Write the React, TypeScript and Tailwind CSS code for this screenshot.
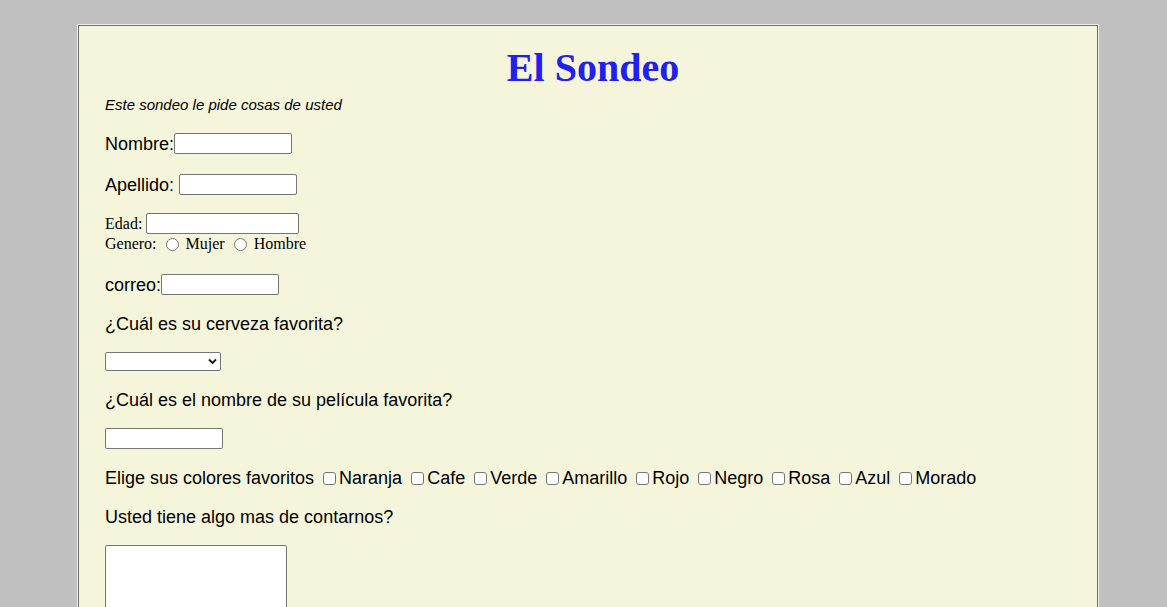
import React from "react";

const sans = { fontFamily: '"Liberation Sans", Arial, sans-serif' };
const serif = { fontFamily: '"Liberation Serif", "Times New Roman", serif' };

const inputCls =
  "h-[21px] self-start border border-[#767676] rounded-[2px] bg-white outline-none";

function Check() {
  return (
    <span className="inline-block w-[13px] h-[13px] shrink-0 border border-[#767676] rounded-[3px] bg-white ml-[9px] mr-[3px]" />
  );
}

function Radio() {
  return (
    <span className="inline-block w-[13px] h-[13px] shrink-0 rounded-full border border-[#767676] bg-white ml-[9px] mr-[7px]" />
  );
}

export default function App() {
  const colors = ["Naranja", "Cafe", "Verde", "Amarillo", "Rojo", "Negro", "Rosa", "Azul", "Morado"];
  return (
    <div className="min-h-screen bg-[#c0c0c0] pt-[24px] pl-[77px] text-black" style={sans}>
      <div className="w-[1022px] border border-[#ececec]">
        <div className="border border-[#6f6f6f] bg-[#f5f5dc] pl-[26px] pr-[16px] pt-[19px] pb-[60px]">
          <h1
            className="h-[46px] leading-[46px] text-center text-[40px] font-bold text-[#2020f0]"
            style={serif}
          >
            El Sondeo
          </h1>
          <div className="mt-[5px] h-[18px] leading-[18px] text-[15px] italic">
            Este sondeo le pide cosas de usted
          </div>

          <div className="mt-[19px] h-[22px] flex items-center text-[18px]">
            <span>Nombre:</span>
            <input className={`${inputCls} w-[118px]`} />
          </div>

          <div className="mt-[19px] h-[22px] flex items-center text-[18px]">
            <span>Apellido:</span>
            <input className={`${inputCls} w-[118px] ml-[5px]`} />
          </div>

          <div className="mt-[17px] h-[22px] flex items-center text-[16px]" style={serif}>
            <span>Edad:</span>
            <input className={`${inputCls} w-[153px] ml-[4px]`} />
          </div>
          <div className="h-[18px] flex items-center text-[16px]" style={serif}>
            <span>Genero:</span>
            <Radio />
            <span>Mujer</span>
            <Radio />
            <span>Hombre</span>
          </div>

          <div className="mt-[21px] h-[22px] flex items-center text-[18px]">
            <span>correo:</span>
            <input className={`${inputCls} w-[118px]`} />
          </div>

          <div className="mt-[17px] h-[22px] flex items-center text-[18px]">
            ¿Cuál es su cerveza favorita?
          </div>

          <div className="mt-[17px] h-[20px] flex items-start">
            <div className="relative w-[116px] h-[19px]">
              <select className="appearance-none w-[116px] h-[19px] border border-[#767676] rounded-[2px] bg-white outline-none" />
              <svg
                className="absolute right-[4px] top-[6px] pointer-events-none"
                width="9"
                height="7"
                viewBox="0 0 9 7"
              >
                <path d="M1 1.5 L4.5 5 L8 1.5" stroke="#111" strokeWidth="1.8" fill="none" />
              </svg>
            </div>
          </div>

          <div className="mt-[17px] h-[22px] flex items-center text-[18px]">
            ¿Cuál es el nombre de su película favorita?
          </div>

          <div className="mt-[17px] h-[22px] flex items-start">
            <input className={`${inputCls} w-[118px]`} />
          </div>

          <div className="mt-[17px] h-[22px] flex items-center text-[18px] whitespace-nowrap">
            <span>Elige sus colores favoritos</span>
            {colors.map((c) => (
              <React.Fragment key={c}>
                <Check />
                <span>{c}</span>
              </React.Fragment>
            ))}
          </div>

          <div className="mt-[17px] h-[22px] flex items-center text-[18px]">
            Usted tiene algo mas de contarnos?
          </div>

          <div className="mt-[17px]">
            <textarea className="block w-[182px] h-[80px] border border-[#767676] rounded-[2px] bg-white outline-none resize-none" />
          </div>
        </div>
      </div>
    </div>
  );
}
